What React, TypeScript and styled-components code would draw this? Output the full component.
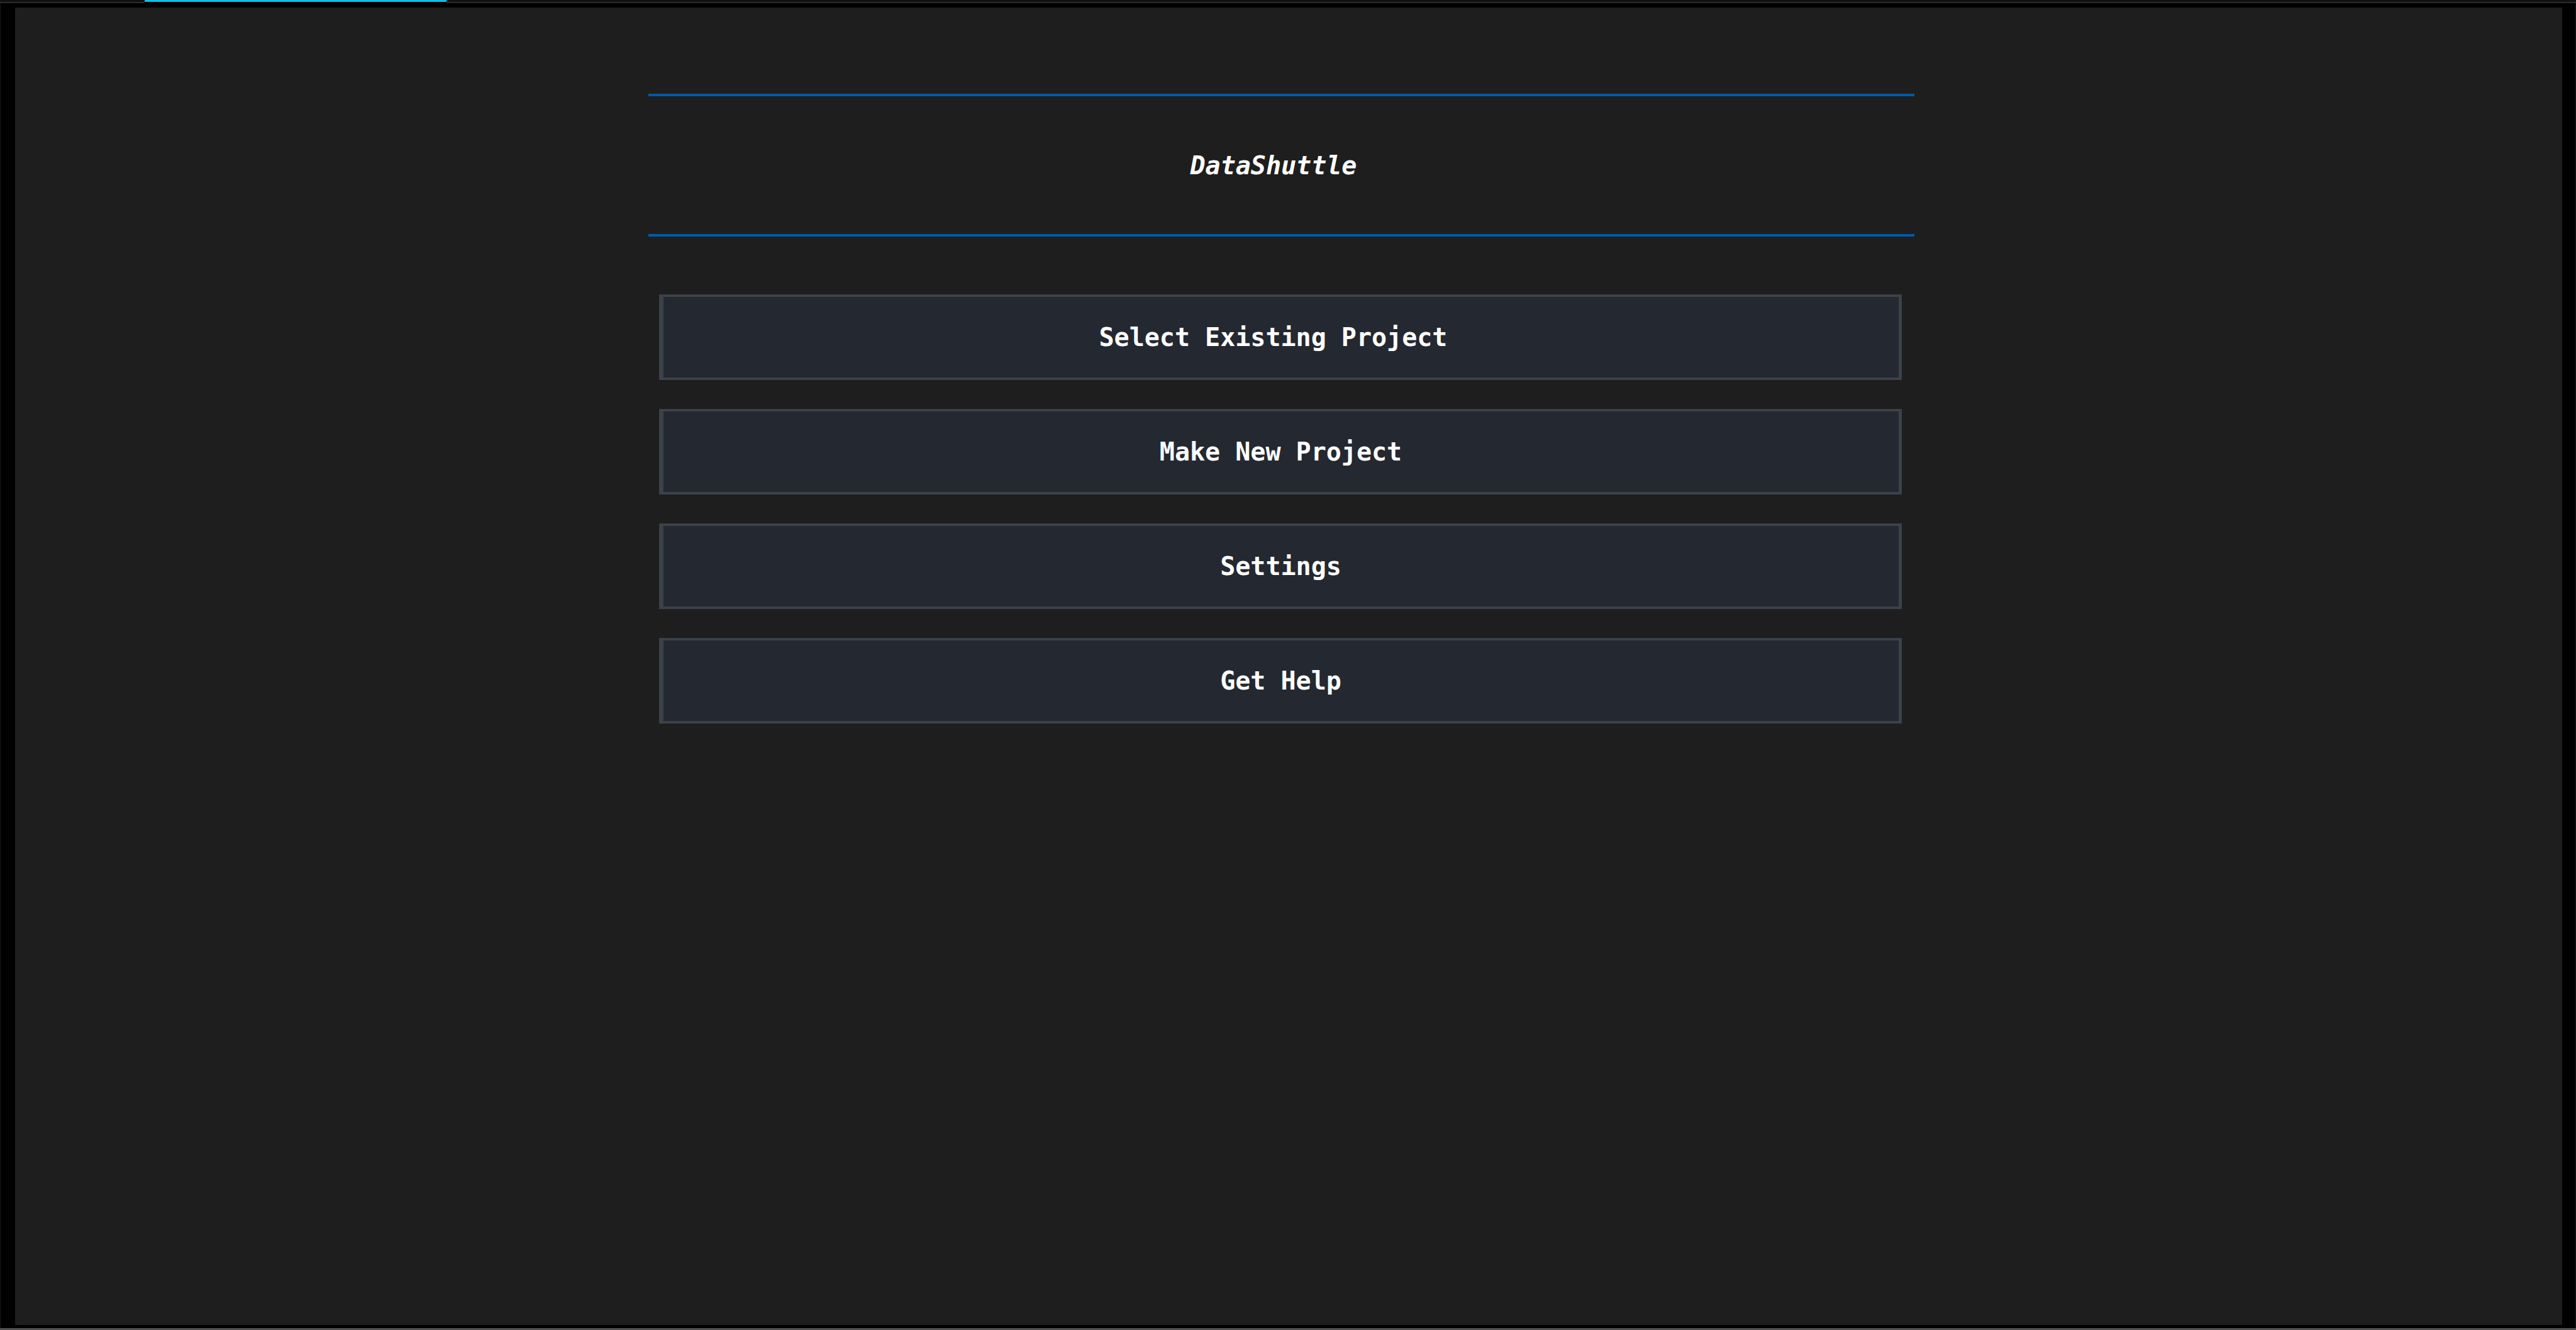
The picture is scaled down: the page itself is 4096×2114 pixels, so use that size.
import React from "react";
import styled, { createGlobalStyle } from "styled-components";

const GlobalStyle = createGlobalStyle`
  *, *::before, *::after { box-sizing: border-box; }
  body { margin: 0; background: #000; }
`;

const Window = styled.div`
  min-height: 100vh;
  display: flex;
  flex-direction: column;
  background: #000;
  border-bottom: 3px solid #505050;
  font-family: "DejaVu Sans Mono", "Liberation Mono", monospace;
  font-size: 40px;
  font-weight: 700;
  line-height: 48px;
  color: #fff;
`;

const TabStrip = styled.div`
  display: flex;
  height: 5px;
`;

const TabEdge = styled.div<{ $width?: number }>`
  ${(p) => (p.$width ? `flex: 0 0 ${p.$width}px;` : "flex: 1;")}
  background: #111;
  border-bottom: 2px solid #2b2b2b;
`;

const ActiveTabEdge = styled.div`
  flex: 0 0 480px;
  background: #00c4ec;
  border-bottom: 2px solid #000;
`;

const Frame = styled.div`
  flex: 1;
  display: flex;
  padding: 7px 21px 5px 23px;
  border: solid #161616;
  border-width: 0 1px;
`;

const Screen = styled.main`
  flex: 1;
  display: flex;
  flex-direction: column;
  align-items: center;
  gap: 92px;
  padding: 137px 24px 137px 0;
  background: #1e1e1e;
`;

const Label = styled.span<{ $odd: boolean }>`
  padding-right: ${(p) => (p.$odd ? "1ch" : "0")};
`;

const Banner = styled.h1`
  width: 50%;
  height: 227px;
  margin: 0;
  display: flex;
  align-items: center;
  justify-content: center;
  border: solid #005ba8;
  border-width: 4px 0;
  font-size: inherit;
  font-style: italic;
`;

const Menu = styled.nav`
  width: 50%;
  padding: 0 20px 0 17px;
  display: flex;
  flex-direction: column;
  gap: 46px;
`;

const MenuButton = styled.button`
  height: 136px;
  padding: 0;
  display: flex;
  align-items: center;
  justify-content: center;
  background: #242830;
  border: solid #3c4249;
  border-width: 4px 5px 4px 7px;
  border-radius: 0;
  color: inherit;
  font: inherit;
  cursor: pointer;
`;

const items = ["Select Existing Project", "Make New Project", "Settings", "Get Help"];

function CellText({ text }: { text: string }) {
  return <Label $odd={text.length % 2 === 1}>{text}</Label>;
}

export default function App() {
  return (
    <>
      <GlobalStyle />
      <Window>
        <TabStrip>
          <TabEdge $width={230} />
          <ActiveTabEdge />
          <TabEdge />
        </TabStrip>
        <Frame>
          <Screen>
            <Banner>
              <CellText text="DataShuttle" />
            </Banner>
            <Menu>
              {items.map((item) => (
                <MenuButton key={item} type="button">
                  <CellText text={item} />
                </MenuButton>
              ))}
            </Menu>
          </Screen>
        </Frame>
      </Window>
    </>
  );
}
